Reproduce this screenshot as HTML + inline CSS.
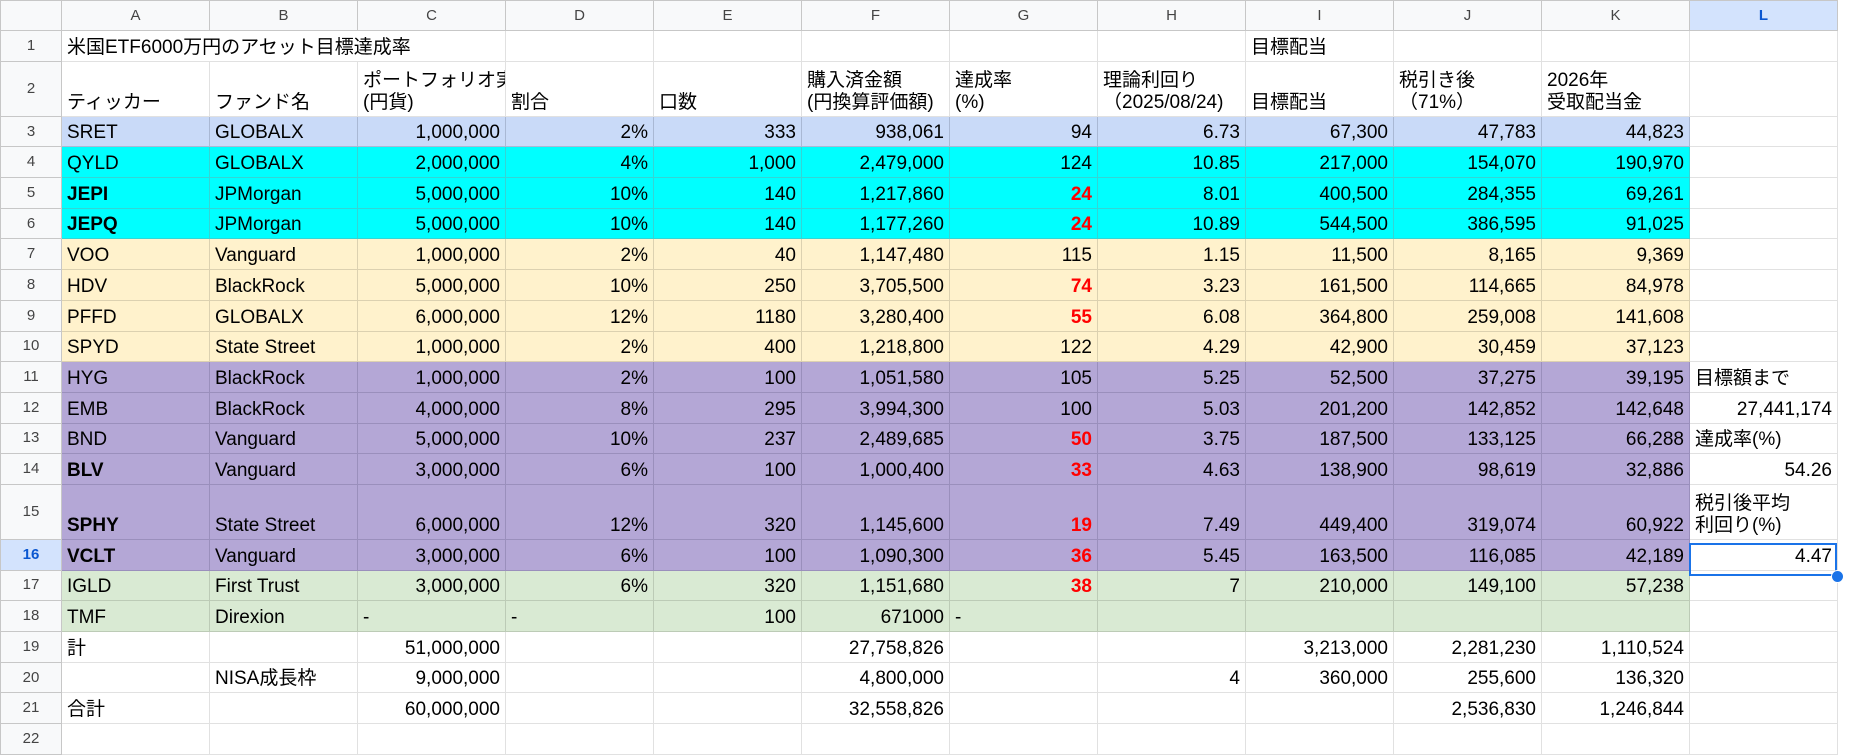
<!DOCTYPE html>
<html><head><meta charset="utf-8"><style>
body{margin:0;width:1865px;height:755px;overflow:hidden;background:#fff;font-family:"Liberation Sans","Noto Sans CJK JP",sans-serif;}
table{border-collapse:collapse;table-layout:fixed;position:absolute;left:0;top:0;width:1837px;}
td{border:1px solid #e1e1e1;padding:0 5px 2px 5px;font-size:19px;color:#000;white-space:nowrap;overflow:hidden;vertical-align:bottom;height:27.7px;line-height:22px;}
td.r{text-align:right}
tr.h td{background:#f8f9fa;color:#444;font-size:15px;text-align:center;vertical-align:middle;border-color:#c7c7c7;padding:0}
td.n{background:#f8f9fa;color:#444;font-size:15px;text-align:center;vertical-align:middle;border-color:#c7c7c7;padding:0}
tr.t td{height:52px}
.b{background:#c9daf8;border-color:#a9b8d4}
.c{background:#00ffff;border-color:#33d6d6}
.o{background:#fff2cc;border-color:#dcd1b0}
.p{background:#b4a7d6;border-color:#9a8fbc}
.g{background:#d9ead3;border-color:#bccbb6}
.x{font-weight:bold}
.red{color:#ff0000;font-weight:bold}
#sel{position:absolute;left:1689px;top:543px;width:148px;height:33px;border:2px solid #1a73e8;box-sizing:border-box;}
#dot{position:absolute;left:1831px;top:570px;width:11px;height:11px;border-radius:50%;background:#1a73e8;border:1px solid #fff}
</style></head><body>
<table>
<colgroup><col style="width:61px"><col span="12" style="width:148px"></colgroup>
<tr class="h"><td style="height:29px"></td><td>A</td><td>B</td><td>C</td><td>D</td><td>E</td><td>F</td><td>G</td><td>H</td><td>I</td><td>J</td><td>K</td><td style="background:#d3e3fd;color:#0b57d0;font-weight:bold">L</td></tr>
<tr><td class="n">1</td><td colspan="3">米国ETF6000万円のアセット目標達成率</td><td></td><td></td><td></td><td></td><td></td><td>目標配当</td><td></td><td></td><td></td></tr>
<tr class="t"><td class="n">2</td><td>ティッカー</td><td>ファンド名</td><td>ポートフォリオ実<br>(円貨)</td><td>割合</td><td>口数</td><td>購入済金額<br>(円換算評価額)</td><td>達成率<br>(%)</td><td>理論利回り<br>（2025/08/24)</td><td>目標配当</td><td>税引き後<br>（71%）</td><td>2026年<br>受取配当金</td><td></td></tr>
<tr><td class="n">3</td><td class="b">SRET</td><td class="b">GLOBALX</td><td class="b r">1,000,000</td><td class="b r">2%</td><td class="b r">333</td><td class="b r">938,061</td><td class="b r">94</td><td class="b r">6.73</td><td class="b r">67,300</td><td class="b r">47,783</td><td class="b r">44,823</td><td></td></tr>
<tr><td class="n">4</td><td class="c">QYLD</td><td class="c">GLOBALX</td><td class="c r">2,000,000</td><td class="c r">4%</td><td class="c r">1,000</td><td class="c r">2,479,000</td><td class="c r">124</td><td class="c r">10.85</td><td class="c r">217,000</td><td class="c r">154,070</td><td class="c r">190,970</td><td></td></tr>
<tr><td class="n">5</td><td class="c x">JEPI</td><td class="c">JPMorgan</td><td class="c r">5,000,000</td><td class="c r">10%</td><td class="c r">140</td><td class="c r">1,217,860</td><td class="c r red">24</td><td class="c r">8.01</td><td class="c r">400,500</td><td class="c r">284,355</td><td class="c r">69,261</td><td></td></tr>
<tr><td class="n">6</td><td class="c x">JEPQ</td><td class="c">JPMorgan</td><td class="c r">5,000,000</td><td class="c r">10%</td><td class="c r">140</td><td class="c r">1,177,260</td><td class="c r red">24</td><td class="c r">10.89</td><td class="c r">544,500</td><td class="c r">386,595</td><td class="c r">91,025</td><td></td></tr>
<tr><td class="n">7</td><td class="o">VOO</td><td class="o">Vanguard</td><td class="o r">1,000,000</td><td class="o r">2%</td><td class="o r">40</td><td class="o r">1,147,480</td><td class="o r">115</td><td class="o r">1.15</td><td class="o r">11,500</td><td class="o r">8,165</td><td class="o r">9,369</td><td></td></tr>
<tr><td class="n">8</td><td class="o">HDV</td><td class="o">BlackRock</td><td class="o r">5,000,000</td><td class="o r">10%</td><td class="o r">250</td><td class="o r">3,705,500</td><td class="o r red">74</td><td class="o r">3.23</td><td class="o r">161,500</td><td class="o r">114,665</td><td class="o r">84,978</td><td></td></tr>
<tr><td class="n">9</td><td class="o">PFFD</td><td class="o">GLOBALX</td><td class="o r">6,000,000</td><td class="o r">12%</td><td class="o r">1180</td><td class="o r">3,280,400</td><td class="o r red">55</td><td class="o r">6.08</td><td class="o r">364,800</td><td class="o r">259,008</td><td class="o r">141,608</td><td></td></tr>
<tr><td class="n">10</td><td class="o">SPYD</td><td class="o">State Street</td><td class="o r">1,000,000</td><td class="o r">2%</td><td class="o r">400</td><td class="o r">1,218,800</td><td class="o r">122</td><td class="o r">4.29</td><td class="o r">42,900</td><td class="o r">30,459</td><td class="o r">37,123</td><td></td></tr>
<tr><td class="n">11</td><td class="p">HYG</td><td class="p">BlackRock</td><td class="p r">1,000,000</td><td class="p r">2%</td><td class="p r">100</td><td class="p r">1,051,580</td><td class="p r">105</td><td class="p r">5.25</td><td class="p r">52,500</td><td class="p r">37,275</td><td class="p r">39,195</td><td>目標額まで</td></tr>
<tr><td class="n">12</td><td class="p">EMB</td><td class="p">BlackRock</td><td class="p r">4,000,000</td><td class="p r">8%</td><td class="p r">295</td><td class="p r">3,994,300</td><td class="p r">100</td><td class="p r">5.03</td><td class="p r">201,200</td><td class="p r">142,852</td><td class="p r">142,648</td><td class="r">27,441,174</td></tr>
<tr><td class="n">13</td><td class="p">BND</td><td class="p">Vanguard</td><td class="p r">5,000,000</td><td class="p r">10%</td><td class="p r">237</td><td class="p r">2,489,685</td><td class="p r red">50</td><td class="p r">3.75</td><td class="p r">187,500</td><td class="p r">133,125</td><td class="p r">66,288</td><td>達成率(%)</td></tr>
<tr><td class="n">14</td><td class="p x">BLV</td><td class="p">Vanguard</td><td class="p r">3,000,000</td><td class="p r">6%</td><td class="p r">100</td><td class="p r">1,000,400</td><td class="p r red">33</td><td class="p r">4.63</td><td class="p r">138,900</td><td class="p r">98,619</td><td class="p r">32,886</td><td class="r">54.26</td></tr>
<tr class="t"><td class="n">15</td><td class="p x">SPHY</td><td class="p">State Street</td><td class="p r">6,000,000</td><td class="p r">12%</td><td class="p r">320</td><td class="p r">1,145,600</td><td class="p r red">19</td><td class="p r">7.49</td><td class="p r">449,400</td><td class="p r">319,074</td><td class="p r">60,922</td><td>税引後平均<br>利回り(%)</td></tr>
<tr><td class="n" style="background:#d3e3fd;color:#0b57d0;font-weight:bold">16</td><td class="p x">VCLT</td><td class="p">Vanguard</td><td class="p r">3,000,000</td><td class="p r">6%</td><td class="p r">100</td><td class="p r">1,090,300</td><td class="p r red">36</td><td class="p r">5.45</td><td class="p r">163,500</td><td class="p r">116,085</td><td class="p r">42,189</td><td class="r">4.47</td></tr>
<tr><td class="n">17</td><td class="g">IGLD</td><td class="g">First Trust</td><td class="g r">3,000,000</td><td class="g r">6%</td><td class="g r">320</td><td class="g r">1,151,680</td><td class="g r red">38</td><td class="g r">7</td><td class="g r">210,000</td><td class="g r">149,100</td><td class="g r">57,238</td><td></td></tr>
<tr><td class="n">18</td><td class="g">TMF</td><td class="g">Direxion</td><td class="g">-</td><td class="g">-</td><td class="g r">100</td><td class="g r">671000</td><td class="g">-</td><td class="g"></td><td class="g"></td><td class="g"></td><td class="g"></td><td></td></tr>
<tr><td class="n">19</td><td>計</td><td></td><td class="r">51,000,000</td><td></td><td></td><td class="r">27,758,826</td><td></td><td></td><td class="r">3,213,000</td><td class="r">2,281,230</td><td class="r">1,110,524</td><td></td></tr>
<tr><td class="n">20</td><td></td><td>NISA成長枠</td><td class="r">9,000,000</td><td></td><td></td><td class="r">4,800,000</td><td></td><td class="r">4</td><td class="r">360,000</td><td class="r">255,600</td><td class="r">136,320</td><td></td></tr>
<tr><td class="n">21</td><td>合計</td><td></td><td class="r">60,000,000</td><td></td><td></td><td class="r">32,558,826</td><td></td><td></td><td></td><td class="r">2,536,830</td><td class="r">1,246,844</td><td></td></tr>
<tr><td class="n">22</td><td></td><td></td><td></td><td></td><td></td><td></td><td></td><td></td><td></td><td></td><td></td><td></td></tr>
</table>
<div id="sel"></div><div id="dot"></div>
</body></html>
